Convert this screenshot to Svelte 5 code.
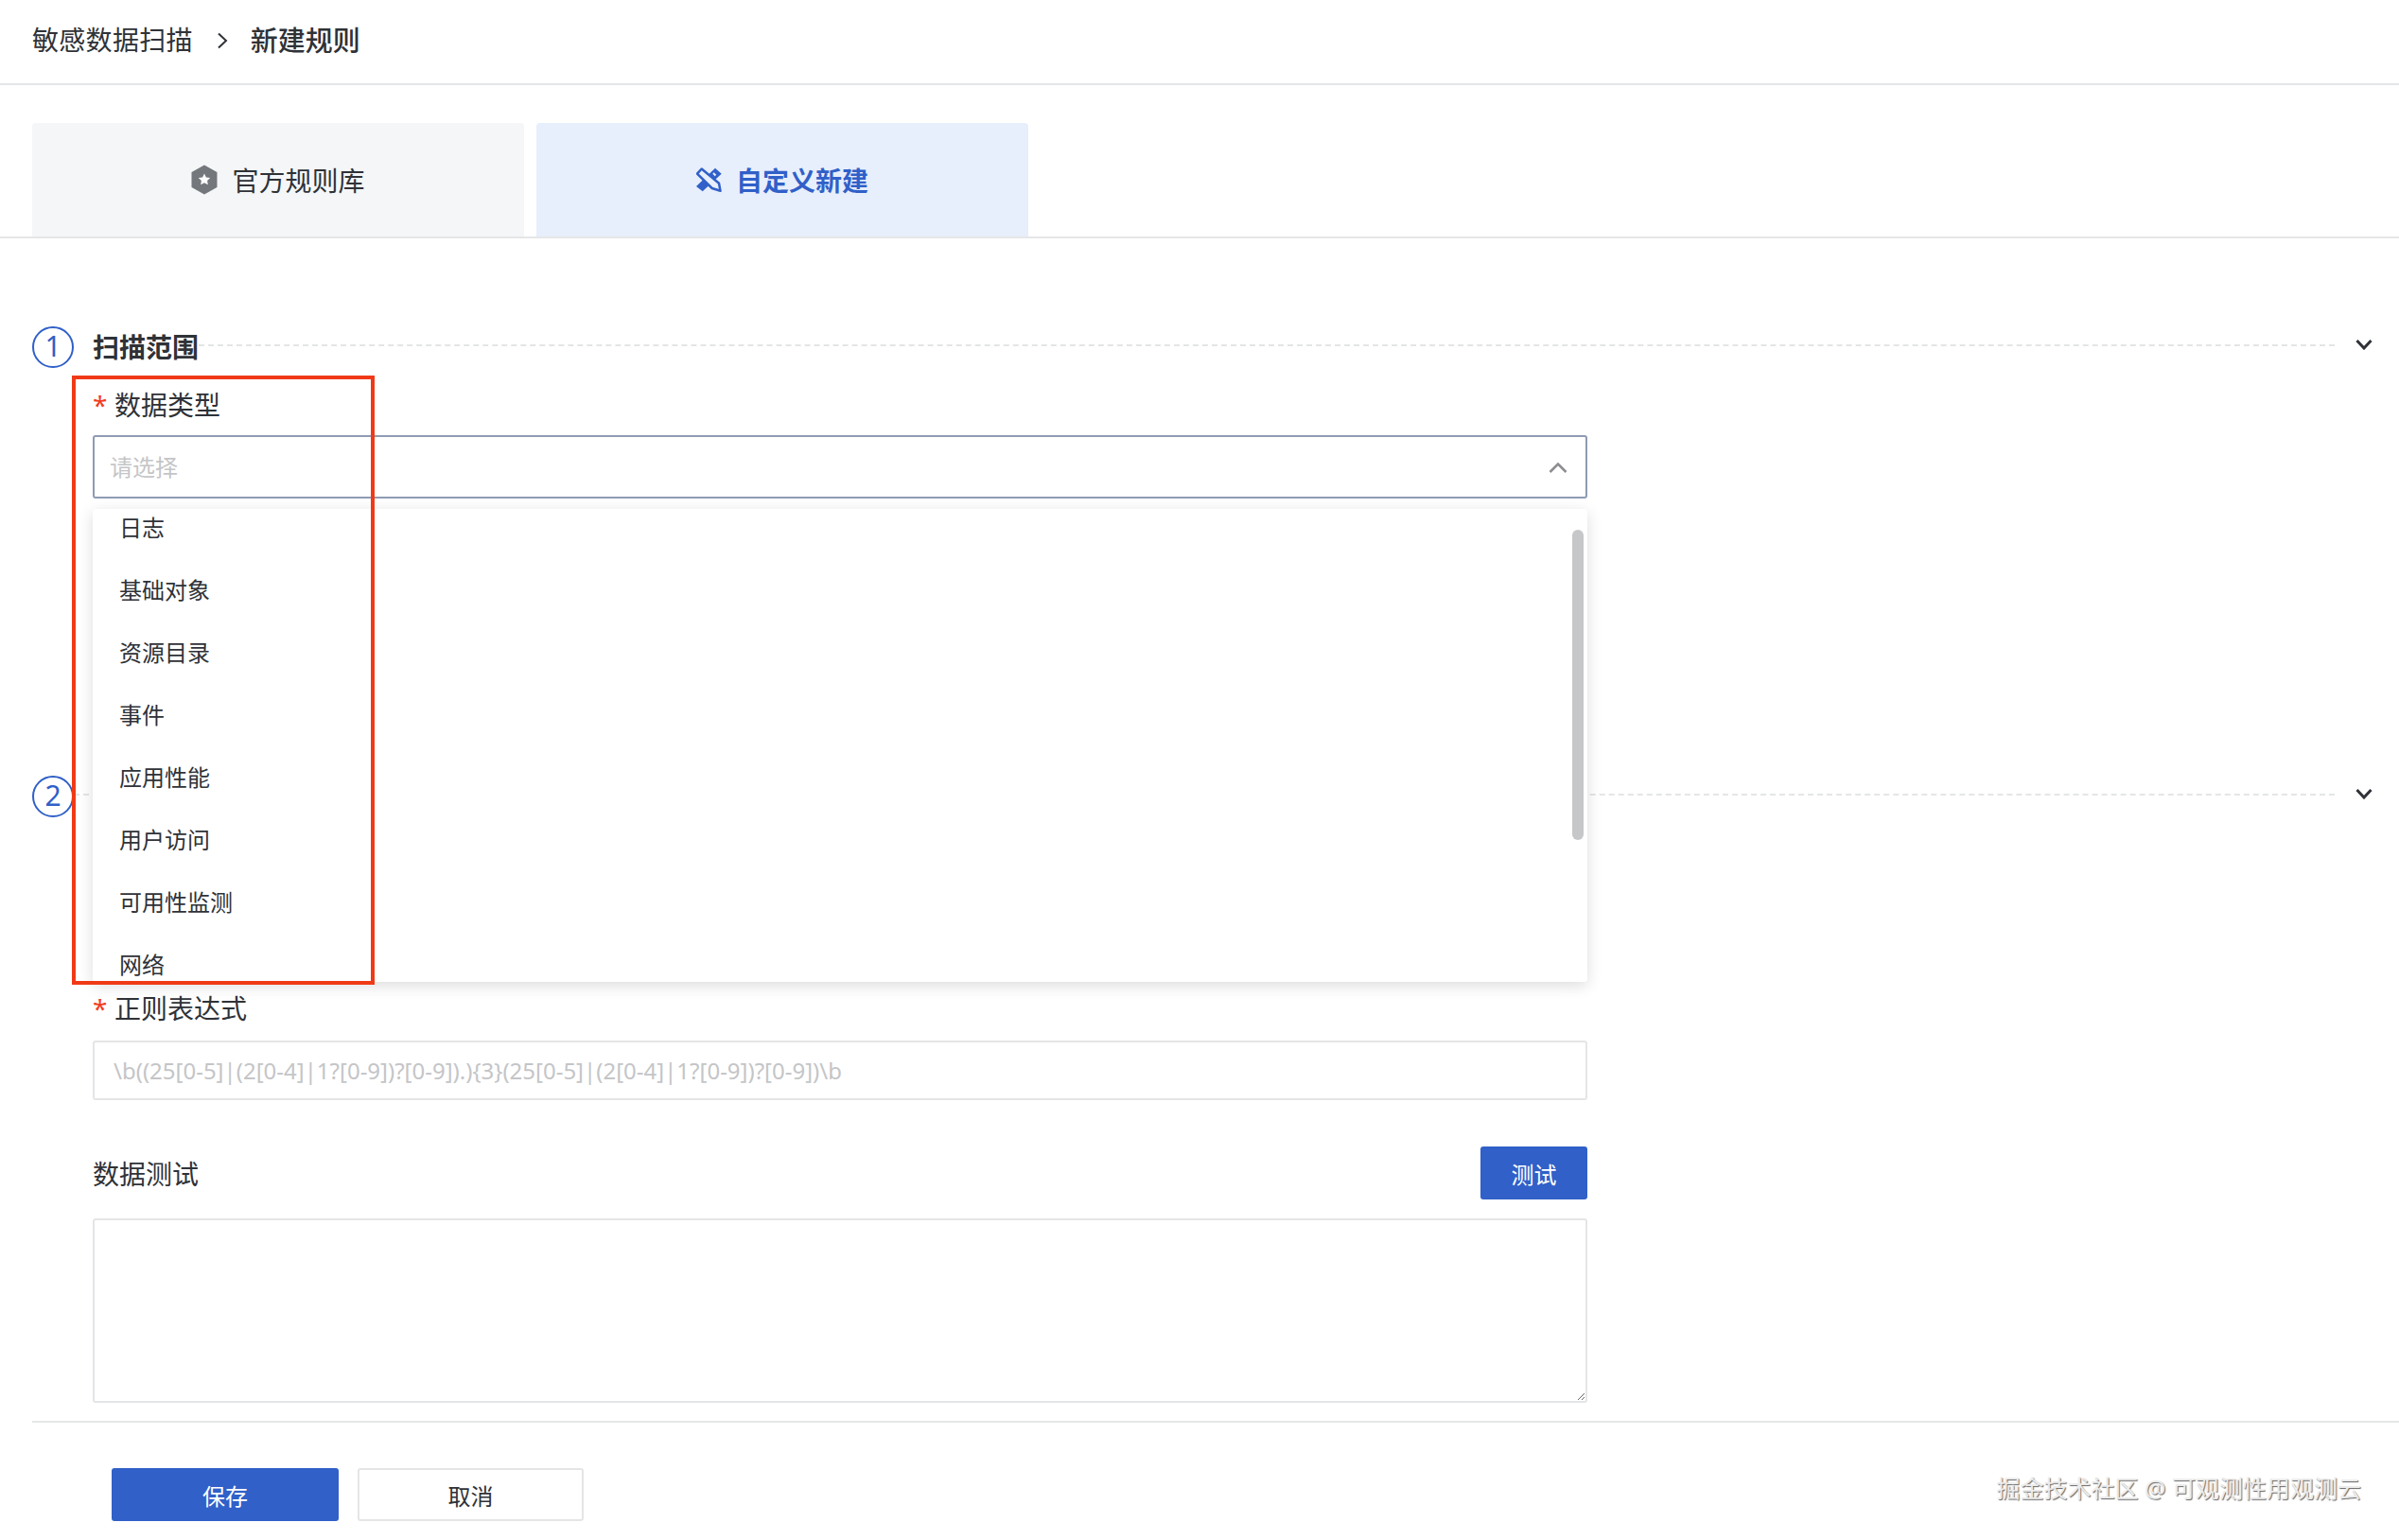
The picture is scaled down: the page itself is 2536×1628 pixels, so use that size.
<script>
  const opciones = ["日志", "基础对象", "资源目录", "事件", "应用性能", "用户访问", "可用性监测", "网络"];
</script>

<div class="page">
  <header class="crumb">
    <span class="crumb-root">敏感数据扫描</span>
    <svg class="crumb-arrow" viewBox="0 0 12 18" width="12" height="18"><path d="M2 1.5 10 9l-8 7.5" /></svg>
    <span class="crumb-now">新建规则</span>
  </header>

  <div class="tabs">
    <div class="tab">
      <svg viewBox="0 0 28 32" width="28" height="32">
        <path class="hex" d="M14 1.5 26.5 8.5v15L14 30.5 1.5 23.5v-15z" />
        <path class="star" d="m14 9.5 1.9 3.9 4.3.6-3.1 3 .7 4.3-3.8-2-3.8 2 .7-4.3-3.1-3 4.3-.6z" />
      </svg>
      <span>官方规则库</span>
    </div>
    <div class="tab active">
      <svg viewBox="0 0 27 26" width="27" height="26">
        <path class="ruler" d="M20 .7 26.700 6.700 6.700 25.300 0 20z" />
        <path class="ruler-cut" d="m18 6 2.500 2.500m-7 1.500 2.500 2.500" />
        <path class="pencil" d="M5.700 1.500 1 6.700 16.700 22 25.500 24.800 24 16.700z" />
      </svg>
      <span>自定义新建</span>
    </div>
  </div>

  <main class="form">
    <div class="sec-head">
      <span class="num">1</span>
      <span class="sec-title">扫描范围</span>
      <span class="dash"></span>
      <svg class="sec-arrow" viewBox="0 0 18 12" width="18" height="12"><path d="M1.500 2 9 10l7.500-8" /></svg>
    </div>

    <div class="fields">
      <label class="lbl"><i>*</i>数据类型</label>
      <div class="select">
        <input class="sel-input" placeholder="请选择" readonly />
        <svg class="sel-arrow" viewBox="0 0 20 11" width="20" height="11"><path d="M1.500 10 10 1.500l8.500 8.500" /></svg>
        <div class="drop">
          <ul>
            {#each opciones as op}
              <li>{op}</li>
            {/each}
          </ul>
          <div class="thumb"></div>
        </div>
      </div>
    </div>

    <div class="sec-head second">
      <span class="num">2</span>
      <span class="dash"></span>
      <svg class="sec-arrow" viewBox="0 0 18 12" width="18" height="12"><path d="M1.500 2 9 10l7.500-8" /></svg>
    </div>

    <div class="fields regex">
      <label class="lbl"><i>*</i>正则表达式</label>
      <input class="text" placeholder={"\\b((25[0-5]|(2[0-4]|1?[0-9])?[0-9]).){3}(25[0-5]|(2[0-4]|1?[0-9])?[0-9])\\b"} />

      <div class="test-row">
        <span class="test-lbl">数据测试</span>
        <button class="btn primary test">测试</button>
      </div>
      <textarea class="area"></textarea>
    </div>

    <div class="foot">
      <button class="btn primary save">保存</button>
      <button class="btn cancel">取消</button>
    </div>
  </main>

  <div class="mark-box"></div>
  <div class="watermark">掘金技术社区 @ 可观测性用观测云</div>
</div>

<style>
  :global(body) {
    margin: 0;
    background: #fff;
  }

  .page {
    position: relative;
    height: 1628px;
    overflow: hidden;
    font-family: "Noto Sans", "Noto Sans CJK SC", sans-serif;
    font-size: 28px;
    color: #2f3237;
  }

  .crumb {
    box-sizing: border-box;
    padding: 0 0 6px 34px;
    display: flex;
    align-items: center;
    border-bottom: 2px solid #e5e6e7;
    height: 90px;
  }
  .crumb-root {
    letter-spacing: 0.3px;
  }
  .crumb-arrow {
    margin: 4px 24px 0 25px;
    fill: none;
    stroke: #2f3237;
    stroke-width: 2;
  }
  .crumb-now {
    font-weight: 500;
    font-size: 29px;
  }

  .tabs {
    margin-top: 40px;
    padding-left: 34px;
    display: flex;
    gap: 13px;
    border-bottom: 2px solid #e5e6e7;
  }
  .tab {
    width: 520px;
    height: 120px;
    display: flex;
    align-items: center;
    justify-content: center;
    gap: 15px;
    background: #f4f6f7;
    border-radius: 4px 4px 0 0;
  }
  .tab.active {
    background: #e7eefc;
    color: #3060c8;
    font-weight: 700;
  }
  .hex {
    fill: #74777c;
    stroke: #74777c;
    stroke-width: 2;
    stroke-linejoin: round;
  }
  .star {
    fill: #fff;
  }
  .ruler {
    fill: #3060c8;
  }
  .ruler-cut {
    fill: none;
    stroke: #e7eefc;
    stroke-width: 2;
  }
  .pencil {
    fill: #e7eefc;
    stroke: #3060c8;
    stroke-width: 2.500;
    stroke-linejoin: round;
  }

  .form {
    padding-left: 34px;
  }

  .sec-head {
    margin-top: 92px;
    height: 44px;
    display: flex;
    align-items: center;
    padding-right: 28px;
  }
  .sec-head.second {
    margin-top: 292px;
  }
  .num {
    width: 44px;
    height: 44px;
    box-sizing: border-box;
    flex: none;
    margin-top: 2px;
    border: 2px solid #3060c8;
    border-radius: 50%;
    color: #3060c8;
    font-size: 30px;
    line-height: 38px;
    text-align: center;
    background: #fff;
  }
  .sec-title {
    margin-left: 20px;
    font-weight: 700;
  }
  .dash {
    flex: 1;
    margin-top: -3px;
    border-top: 2px dashed #e4e5e6;
  }
  .sec-arrow {
    margin: -5px 0 0 22px;
    flex: none;
    fill: none;
    stroke: #2f3237;
    stroke-width: 3;
  }

  .fields {
    margin-left: 64px;
    width: 1580px;
  }
  .lbl {
    display: block;
    margin-top: 20px;
    height: 40px;
    line-height: 40px;
  }
  .lbl i {
    display: inline-block;
    width: 23px;
    color: #f23c1f;
    font-style: normal;
  }

  .select {
    position: relative;
    margin-top: 12px;
    height: 67px;
  }
  .sel-input {
    width: 100%;
    height: 100%;
    box-sizing: border-box;
    padding: 0 16px;
    border: 2px solid #8f9bb3;
    border-radius: 3px;
    outline: none;
    font: inherit;
    font-size: 24px;
  }
  .sel-input::placeholder,
  .text::placeholder {
    color: #c4c5c7;
    opacity: 1;
  }
  .sel-arrow {
    position: absolute;
    right: 21px;
    top: 29px;
    fill: none;
    stroke: #8c8d90;
    stroke-width: 2.500;
  }

  .drop {
    position: absolute;
    z-index: 2;
    left: 0;
    top: 78px;
    width: 100%;
    height: 500px;
    overflow: hidden;
    background: #fff;
    border-radius: 3px;
    box-shadow: 0 4px 16px rgba(0, 0, 0, 0.14);
  }
  .drop ul {
    list-style: none;
    margin: -13px 0 0;
    padding: 0;
  }
  .drop li {
    height: 66px;
    line-height: 66px;
    padding-left: 28px;
    font-size: 24px;
  }
  .thumb {
    position: absolute;
    right: 4px;
    top: 22px;
    width: 12px;
    height: 328px;
    border-radius: 6px;
    background: #c6c7c8;
  }

  .regex .lbl {
    margin-top: 183px;
  }
  .text {
    display: block;
    width: 100%;
    height: 63px;
    margin-top: 14px;
    box-sizing: border-box;
    padding: 0 20px;
    border: 2px solid #e4e5e6;
    border-radius: 3px;
    outline: none;
    font: inherit;
    font-size: 24px;
  }

  .test-row {
    margin-top: 49px;
    display: flex;
    align-items: center;
    justify-content: space-between;
  }

  .btn {
    height: 56px;
    padding: 0;
    border: 0;
    border-radius: 3px;
    font: inherit;
    font-size: 24px;
  }
  .primary {
    background: #3060c8;
    color: #fff;
  }
  .test {
    width: 113px;
  }

  .area {
    display: block;
    width: 100%;
    height: 195px;
    margin-top: 20px;
    box-sizing: border-box;
    border: 2px solid #e4e5e6;
    border-radius: 3px;
    outline: none;
    resize: vertical;
  }

  .foot {
    margin-top: 19px;
    padding: 48px 0 0 84px;
    display: flex;
    gap: 20px;
    border-top: 2px solid #e5e6e7;
  }
  .save {
    width: 240px;
  }
  .cancel {
    width: 239px;
    box-sizing: border-box;
    background: #fff;
    color: #2f3237;
    border: 2px solid #e4e5e6;
  }

  .mark-box {
    position: absolute;
    z-index: 3;
    left: 76px;
    top: 397px;
    width: 320px;
    height: 644px;
    box-sizing: border-box;
    border: 4px solid #f03a17;
  }

  .watermark {
    position: absolute;
    right: 40px;
    bottom: 38px;
    font-size: 25px;
    color: #ececec;
    text-shadow: 1px 1px 1px #666;
  }
</style>
